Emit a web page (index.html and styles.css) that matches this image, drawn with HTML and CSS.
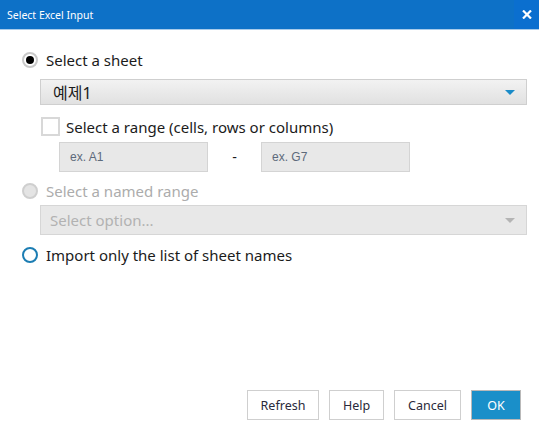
FILE: index.html
```html
<!DOCTYPE html>
<html>
<head>
<meta charset="utf-8">
<link rel="stylesheet" href="styles.css">
</head>
<body>
<div class="dialog">
  <div class="titlebar">
    <span class="title">Select Excel Input</span>
    <span class="close">
      <svg width="10" height="9" viewBox="0 0 10 9"><path d="M1 0.5 L9 8.5 M9 0.5 L1 8.5" stroke="#fff" stroke-width="2.2" fill="none"/></svg>
    </span>
  </div>
  <div class="content">
    <div class="row r1">
      <span class="radio checked"><span class="dot"></span></span>
      <span class="label">Select a sheet</span>
    </div>
    <div class="select sel1">
      <span class="sel-text">예제1</span>
      <span class="arrow blue"></span>
    </div>
    <div class="row r2">
      <span class="checkbox"></span>
      <span class="label">Select a range (cells, rows or columns)</span>
    </div>
    <div class="range">
      <div class="input">ex. A1</div>
      <div class="dash">-</div>
      <div class="input">ex. G7</div>
    </div>
    <div class="row r3">
      <span class="radio disabled"></span>
      <span class="label muted">Select a named range</span>
    </div>
    <div class="select sel2">
      <span class="sel-text muted">Select option...</span>
      <span class="arrow gray"></span>
    </div>
    <div class="row r4">
      <span class="radio focus"></span>
      <span class="label">Import only the list of sheet names</span>
    </div>
  </div>
  <div class="footer">
    <button class="btn b-refresh">Refresh</button>
    <button class="btn b-help">Help</button>
    <button class="btn b-cancel">Cancel</button>
    <button class="btn ok">OK</button>
  </div>
</div>
</body>
</html>
```
FILE: styles.css
```css
html, body {
  margin: 0;
  padding: 0;
  background: #fff;
}
body {
  width: 539px;
  height: 423px;
  overflow: hidden;
  font-family: "Noto Sans", "Noto Sans CJK KR", sans-serif;
  color: #1b1b1b;
}
.dialog {
  width: 539px;
  height: 423px;
  display: flex;
  flex-direction: column;
}
.titlebar {
  height: 29px;
  background: #0d71c7;
  border-bottom: 1px solid #a8cbea;
  display: flex;
  align-items: center;
  justify-content: space-between;
}
.title {
  color: #fff;
  font-size: 10.5px;
  padding-left: 7px;
  font-family: "Noto Sans", sans-serif;
}
.close {
  width: 25px;
  height: 29px;
  background: #0b6fcf;
  display: flex;
  align-items: center;
  justify-content: center;
}
.content {
  flex: 1;
  padding-left: 22px;
  padding-right: 12px;
}
.row {
  display: flex;
  align-items: center;
  height: 20px;
}
.label {
  font-size: 15px;
  margin-left: 8px;
  white-space: nowrap;
}
.muted { color: #acacac; }
.r1 { margin-top: 20px; }
.radio {
  box-sizing: border-box;
  width: 16px;
  height: 16px;
  border-radius: 50%;
  display: flex;
  align-items: center;
  justify-content: center;
  flex: none;
}
.radio.checked { border: 2px solid #c9c9c9; background: #fff; }
.radio.checked .dot { width: 8px; height: 8px; border-radius: 50%; background: #000; }
.radio.disabled { border: 2px solid #cfcfcf; background: #e4e4e4; }
.radio.focus { border: 2px solid #1c7db3; background: #fff; }
.select {
  box-sizing: border-box;
  margin-left: 18px;
  width: 487px;
  display: flex;
  align-items: center;
  justify-content: space-between;
  border: 1px solid #cfcfcf;
  padding: 0 11px 0 12px;
}
.sel1 {
  margin-top: 9px;
  height: 26px;
  background: linear-gradient(#f2f2f2, #e1e1e1);
}
.sel1 .sel-text { font-size: 16px; color: #1b1b1b; }
.sel2 {
  margin-top: 4px;
  height: 30px;
  background: #e8e8e8;
  border-color: #d6d6d6;
  padding-left: 9px;
}
.sel2 .sel-text { font-size: 15px; color: #b2b2b2; }
.arrow {
  width: 0;
  height: 0;
  border-left: 5px solid transparent;
  border-right: 5px solid transparent;
  border-top: 5px solid #1a8bc8;
}
.arrow.gray { border-top-color: #b4b4b4; }
.r2 { margin-top: 12px; margin-left: 19px; height: 19px; }
.r2 .label { margin-left: 6px; }
.checkbox {
  box-sizing: border-box;
  width: 19px;
  height: 19px;
  border: 2px solid #d8d8d8;
  background: #fff;
  flex: none;
}
.range {
  display: flex;
  align-items: center;
  margin-left: 37px;
  margin-top: 6px;
  height: 30px;
}
.input {
  box-sizing: border-box;
  width: 149px;
  height: 30px;
  background: #e8e8e8;
  border: 1px solid #d4d4d4;
  font-family: "Liberation Sans", Arial, sans-serif;
  font-size: 12px;
  color: #5d6a7b;
  padding-left: 10px;
  display: flex;
  align-items: center;
}
.dash {
  width: 53px;
  text-align: center;
  font-size: 14px;
  color: #1b1b1b;
  font-family: "Liberation Sans", Arial, sans-serif;
}
.r3 { margin-top: 9px; }
.r4 { margin-top: 10px; }
.footer {
  display: flex;
  justify-content: flex-end;
  gap: 10px;
  padding-right: 18px;
  padding-bottom: 3px;
}
.btn {
  box-sizing: border-box;
  height: 30px;
  border: 1px solid #cfcfcf;
  background: #fff;
  font-family: "Noto Sans", sans-serif;
  font-size: 12.5px;
  color: #2a2a3a;
  padding: 0;
}
.b-refresh { width: 72px; }
.b-help { width: 55px; }
.b-cancel { width: 67px; }
.ok {
  width: 50px;
  background: #1a8fc9;
  border-color: #b9b9b9;
  color: #fff;
}
```
